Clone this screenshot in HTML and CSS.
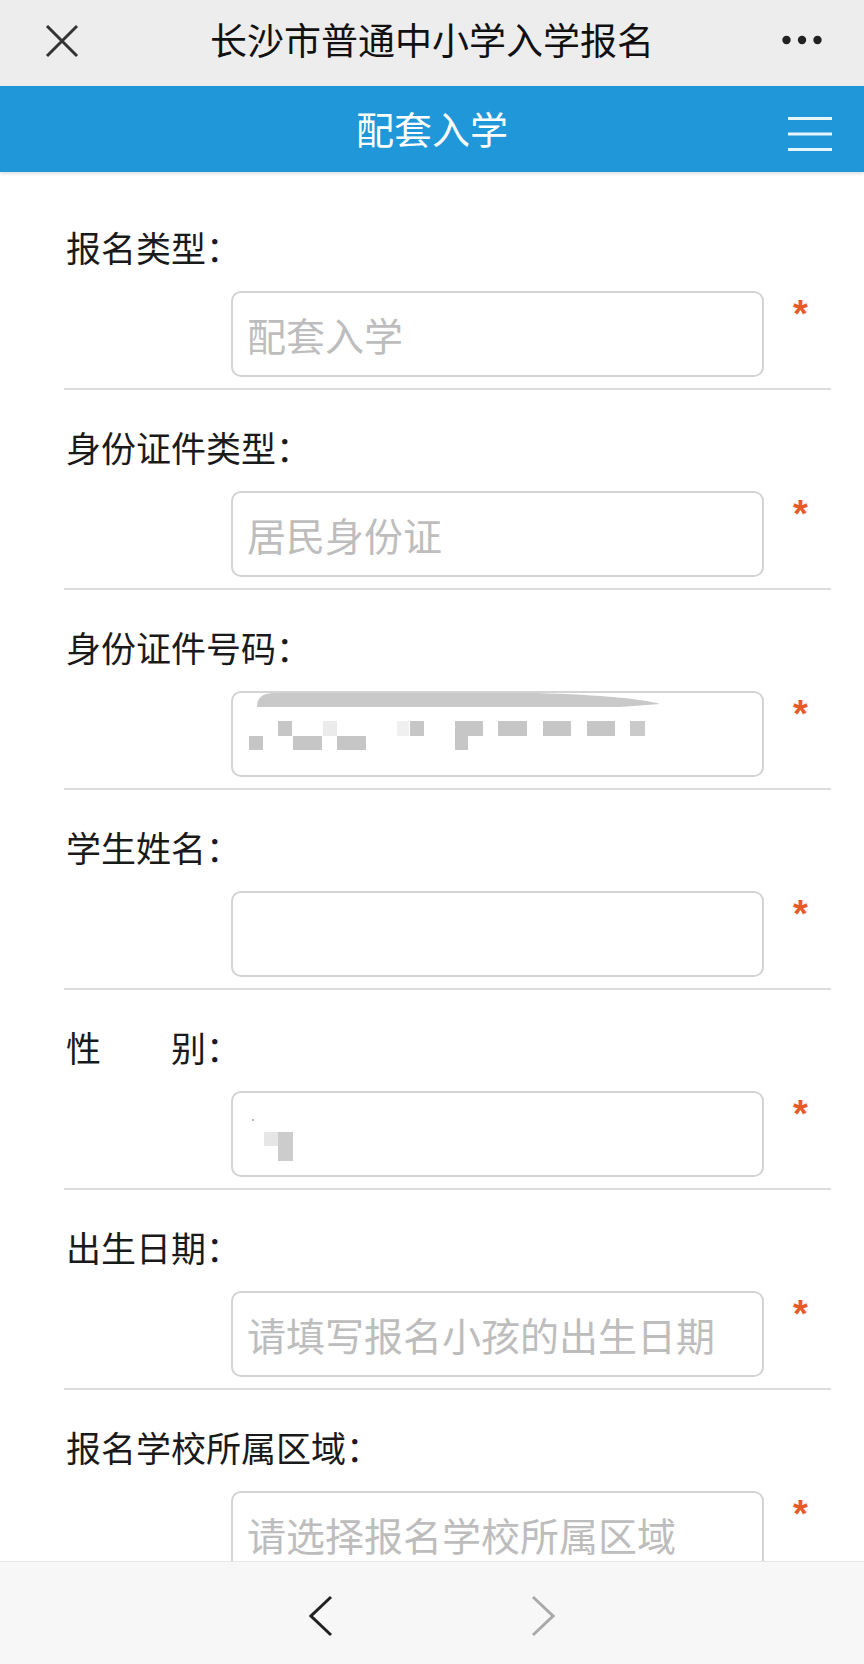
FILE: index.html
```html
<!DOCTYPE html>
<html lang="zh-CN">
<head>
    <meta charset="UTF-8">
    <meta name="viewport" content="width=device-width, initial-scale=1.0">
    <title>长沙市普通中小学入学报名</title>
    <link rel="stylesheet" href="styles.css">
</head>
<body>
    <div class="topbar">
        <svg class="close-icon" width="34" height="34" viewBox="0 0 34 34">
            <path d="M2 2 L32 32 M32 2 L2 32" stroke="#333" stroke-width="3" fill="none"/>
        </svg>
        <div class="topbar-title">长沙市普通中小学入学报名</div>
        <svg class="more-icon" width="40" height="10" viewBox="0 0 40 10">
            <circle cx="4.5" cy="5" r="4.2" fill="#222"/>
            <circle cx="20" cy="5" r="4.2" fill="#222"/>
            <circle cx="35.5" cy="5" r="4.2" fill="#222"/>
        </svg>
    </div>

    <div class="navbar">
        <div class="navbar-title">配套入学</div>
        <svg class="menu-icon" width="44" height="36" viewBox="0 0 44 36">
            <path d="M0 2.5 H44 M0 18 H44 M0 33.5 H44" stroke="#e6f5ff" stroke-width="3" fill="none"/>
        </svg>
    </div>

    <div class="content">
        <div class="form">
            <div class="row first">
                <div class="label">报名类型：</div>
                <div class="field">
                    <div class="box"><span class="placeholder">配套入学</span></div>
                    <span class="required">*</span>
                </div>
            </div>

            <div class="row">
                <div class="label">身份证件类型：</div>
                <div class="field">
                    <div class="box"><span class="placeholder">居民身份证</span></div>
                    <span class="required">*</span>
                </div>
            </div>

            <div class="row">
                <div class="label">身份证件号码：</div>
                <div class="field">
                    <div class="box">
                        <!-- mosaic over the ID number -->
                        <svg class="mosaic" width="529" height="82" viewBox="0 0 529 82">
                            <path d="M24 14 C24 4 30 0 42 0 L304 0 C370 2 410 6 427 11 L387 14 Z" fill="#c9c9c9"/>
                            <rect x="45" y="28" width="14" height="15" fill="#c6c6c6"/>
                            <rect x="90" y="28" width="14" height="15" fill="#ebebeb"/>
                            <rect x="164" y="28" width="12" height="15" fill="#f0f0f0"/>
                            <rect x="177" y="28" width="14" height="15" fill="#c6c6c6"/>
                            <rect x="222" y="28" width="28" height="15" fill="#c6c6c6"/>
                            <rect x="265" y="28" width="29" height="15" fill="#c6c6c6"/>
                            <rect x="310" y="28" width="28" height="15" fill="#c6c6c6"/>
                            <rect x="354" y="28" width="28" height="15" fill="#c6c6c6"/>
                            <rect x="397" y="28" width="15" height="15" fill="#cacaca"/>
                            <rect x="16" y="43" width="14" height="14" fill="#c6c6c6"/>
                            <rect x="60" y="43" width="29" height="14" fill="#c6c6c6"/>
                            <rect x="104" y="43" width="29" height="14" fill="#c6c6c6"/>
                            <rect x="222" y="43" width="13" height="14" fill="#c6c6c6"/>
                        </svg>
                    </div>
                    <span class="required">*</span>
                </div>
            </div>

            <div class="row">
                <div class="label">学生姓名：</div>
                <div class="field">
                    <div class="box"></div>
                    <span class="required">*</span>
                </div>
            </div>

            <div class="row">
                <div class="label">性　　别：</div>
                <div class="field">
                    <div class="box">
                        <svg class="mosaic" width="529" height="82" viewBox="0 0 529 82">
                            <rect x="19" y="26" width="2" height="2" fill="#bbb"/>
                            <rect x="31" y="39" width="14" height="14" fill="#e6e6e6"/>
                            <rect x="45" y="39" width="15" height="29" fill="#cccccc"/>
                        </svg>
                    </div>
                    <span class="required">*</span>
                </div>
            </div>

            <div class="row">
                <div class="label">出生日期：</div>
                <div class="field">
                    <div class="box"><span class="placeholder">请填写报名小孩的出生日期</span></div>
                    <span class="required">*</span>
                </div>
            </div>

            <div class="row">
                <div class="label">报名学校所属区域：</div>
                <div class="field">
                    <div class="box"><span class="placeholder">请选择报名学校所属区域</span></div>
                    <span class="required">*</span>
                </div>
            </div>
        </div>
    </div>

    <div class="bottombar">
        <svg class="arrow" width="24" height="42" viewBox="0 0 24 42">
            <path d="M22 2 L2 21 L22 40" stroke="#222" stroke-width="3" fill="none"/>
        </svg>
        <svg class="arrow" width="24" height="42" viewBox="0 0 24 42">
            <path d="M2 2 L22 21 L2 40" stroke="#aaa" stroke-width="3" fill="none"/>
        </svg>
    </div>
</body>
</html>
```

FILE: styles.css
```css
html, body {
    margin: 0;
    height: 100%;
}

body {
    display: flex;
    flex-direction: column;
    height: 1664px;
    overflow: hidden;
    background-color: #fff;
    font-family: "Noto Sans CJK SC", sans-serif;
    color: #1a1a1a;
}

/* wechat style top bar */
.topbar {
    flex: 0 0 86px;
    display: grid;
    grid-template-columns: 1fr auto 1fr;
    align-items: center;
    background-color: #ededed;
}

.close-icon {
    margin-left: 45px;
    margin-top: -4px;
}

.topbar-title {
    font-size: 37px;
    color: #111;
    margin-top: -9px;
}

.more-icon {
    justify-self: end;
    margin-right: 42px;
    margin-top: -6px;
}

.navbar {
    flex: 0 0 86px;
    position: relative;
    display: flex;
    align-items: center;
    justify-content: center;
    background-color: #1f97d8;
    box-shadow: 0 2px 3px rgba(0, 0, 0, 0.12);
    z-index: 1;
}

.navbar-title {
    font-size: 38px;
    color: #fff;
    margin-top: -4px;
}

.menu-icon {
    position: absolute;
    right: 32px;
    top: 30px;
}

.content {
    flex: 1;
    overflow: hidden;
}

.form {
    margin: 0 33px 0 64px;
}

.row {
    padding: 32px 0 11px;
    border-bottom: 2px solid #dcdcdc;
}

.row.first {
    padding-top: 50px;
}

.label {
    padding-left: 2px;
    font-size: 35px;
    line-height: 50px;
}

.field {
    display: flex;
    align-items: flex-start;
    margin-top: 19px;
    padding-left: 167px;
}

.box {
    width: 533px;
    height: 86px;
    box-sizing: border-box;
    border: 2px solid #d3d3d3;
    border-radius: 10px;
    padding-left: 14px;
    display: flex;
    align-items: center;
    overflow: hidden;
}

.box .mosaic {
    display: block;
    margin-left: -14px;
    flex: none;
}

.placeholder {
    font-size: 39px;
    color: #bdbdbd;
    white-space: nowrap;
}

.required {
    margin-left: 29px;
    margin-top: 4px;
    font-family: "Liberation Sans", sans-serif;
    font-size: 38px;
    font-weight: bold;
    line-height: 38px;
    color: #e9592a;
}

.bottombar {
    flex: 0 0 103px;
    display: flex;
    align-items: center;
    justify-content: center;
    gap: 198px;
    padding-top: 6px;
    box-sizing: border-box;
    background-color: #f7f7f7;
    border-top: 1px solid #e6e6e6;
}
```
